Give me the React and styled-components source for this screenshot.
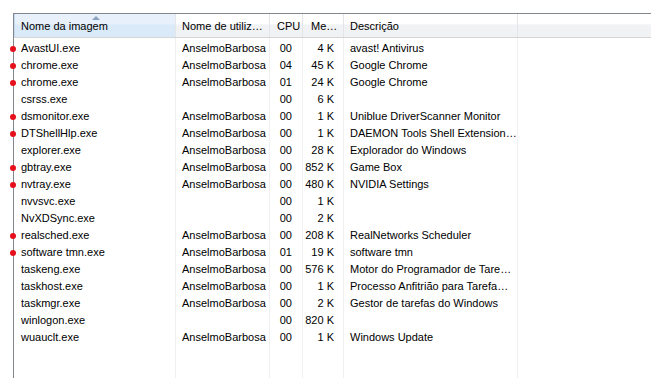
import React from 'react';
import styled, { createGlobalStyle } from 'styled-components';

const GlobalStyle = createGlobalStyle`
    html, body {
        margin: 0;
        padding: 0;
        background: #fff;
    }
    body {
        font-family: "Liberation Sans", Arial, sans-serif;
        font-size: 11px;
        color: #000;
    }
`;

const COLS = '162px 94px 33px 41px 174px 1fr';

const Page = styled.div`
    width: 651px;
    height: 378px;
    padding: 13px 0 0 13px;
    box-sizing: border-box;
    overflow: hidden;
`;

const Frame = styled.div`
    height: 100%;
    border-top: 1px solid #82878f;
    border-left: 1px solid #82878f;
    display: flex;
    flex-direction: column;
`;

const Header = styled.div`
    display: grid;
    grid-template-columns: ${COLS};
    height: 23px;
    background: linear-gradient(#ffffff 0%, #ffffff 45%, #f1f2f4 46%, #f1f2f4 100%);
    border-bottom: 1px solid #d5d5d5;
`;

const HeadCell = styled.div`
    position: relative;
    display: flex;
    align-items: center;
    padding-left: ${props => props.pad || 6}px;
    padding-top: 1px;
    border-right: ${props => props.last ? 'none' : '1px solid #e3e5e8'};
    background: ${props => props.sorted
        ? 'linear-gradient(#e8f1fb 0%, #e8f1fb 45%, #dbeaf8 46%, #d9e9f8 100%)'
        : 'transparent'};
    box-shadow: ${props => props.sorted ? 'inset 1px 0 0 #c4daf0' : 'none'};
    white-space: nowrap;
    overflow: hidden;
`;

const SortArrow = styled.svg`
    position: absolute;
    top: 2px;
    left: 78px;
`;

const Body = styled.div`
    flex: 1;
    display: grid;
    grid-template-columns: ${COLS};
    grid-auto-rows: 17px;
    align-content: start;
    padding-top: 2px;
    position: relative;
`;

const Row = styled.div`
    display: contents;
`;

const Cell = styled.div`
    position: relative;
    display: flex;
    align-items: center;
    justify-content: ${props => props.right ? 'flex-end' : 'flex-start'};
    padding-left: ${props => props.pad || 6}px;
    padding-right: ${props => props.right ? props.rpad || 10 : 0}px;
    white-space: nowrap;
    overflow: hidden;
    line-height: 17px;
`;

const Lines = styled.div`
    position: absolute;
    inset: 0;
    display: grid;
    grid-template-columns: ${COLS};
    pointer-events: none;
`;

const Line = styled.div`
    border-right: ${props => props.last ? 'none' : '1px solid #f0f0f0'};
`;

const Dot = styled.span`
    position: absolute;
    left: -4px;
    top: 6px;
    width: 6px;
    height: 6px;
    border-radius: 50%;
    background: #e5101c;
`;

const NameCell = styled(Cell)`
    overflow: visible;
`;

const rows = [
    ['AvastUI.exe', 'AnselmoBarbosa', '00', '4 K', 'avast! Antivirus', true],
    ['chrome.exe', 'AnselmoBarbosa', '04', '45 K', 'Google Chrome', true],
    ['chrome.exe', 'AnselmoBarbosa', '01', '24 K', 'Google Chrome', true],
    ['csrss.exe', '', '00', '6 K', '', false],
    ['dsmonitor.exe', 'AnselmoBarbosa', '00', '1 K', 'Uniblue DriverScanner Monitor', true],
    ['DTShellHlp.exe', 'AnselmoBarbosa', '00', '1 K', 'DAEMON Tools Shell Extension…', true],
    ['explorer.exe', 'AnselmoBarbosa', '00', '28 K', 'Explorador do Windows', false],
    ['gbtray.exe', 'AnselmoBarbosa', '00', '852 K', 'Game Box', true],
    ['nvtray.exe', 'AnselmoBarbosa', '00', '480 K', 'NVIDIA Settings', true],
    ['nvvsvc.exe', '', '00', '1 K', '', false],
    ['NvXDSync.exe', '', '00', '2 K', '', false],
    ['realsched.exe', 'AnselmoBarbosa', '00', '208 K', 'RealNetworks Scheduler', true],
    ['software tmn.exe', 'AnselmoBarbosa', '01', '19 K', 'software tmn', true],
    ['taskeng.exe', 'AnselmoBarbosa', '00', '576 K', 'Motor do Programador de Tare…', false],
    ['taskhost.exe', 'AnselmoBarbosa', '00', '1 K', 'Processo Anfitrião para Tarefa…', false],
    ['taskmgr.exe', 'AnselmoBarbosa', '00', '2 K', 'Gestor de tarefas do Windows', false],
    ['winlogon.exe', '', '00', '820 K', '', false],
    ['wuauclt.exe', 'AnselmoBarbosa', '00', '1 K', 'Windows Update', false],
];

const App = () => {
    return (
        <Page>
            <GlobalStyle />
            <Frame>
                <Header>
                    <HeadCell sorted pad={7}>
                        <SortArrow width="8" height="4" viewBox="0 0 8 4">
                            <path d="M0 4 L4 0 L8 4 Z" fill="#8aa2bd" />
                        </SortArrow>
                        Nome da imagem
                    </HeadCell>
                    <HeadCell>Nome de utiliz…</HeadCell>
                    <HeadCell pad={7}>CPU</HeadCell>
                    <HeadCell pad={8}>Me…</HeadCell>
                    <HeadCell>Descrição</HeadCell>
                    <HeadCell last />
                </Header>
                <Body>
                    <Lines>
                        <Line /><Line /><Line /><Line /><Line /><Line last />
                    </Lines>
                    {rows.map((r, i) => (
                        <Row key={i}>
                            <NameCell pad={7}>
                                {r[5] && <Dot />}
                                {r[0]}
                            </NameCell>
                            <Cell>{r[1]}</Cell>
                            <Cell right rpad={11}>{r[2]}</Cell>
                            <Cell right rpad={10}>{r[3]}</Cell>
                            <Cell>{r[4]}</Cell>
                            <Cell />
                        </Row>
                    ))}
                </Body>
            </Frame>
        </Page>
    );
};

export default App;
